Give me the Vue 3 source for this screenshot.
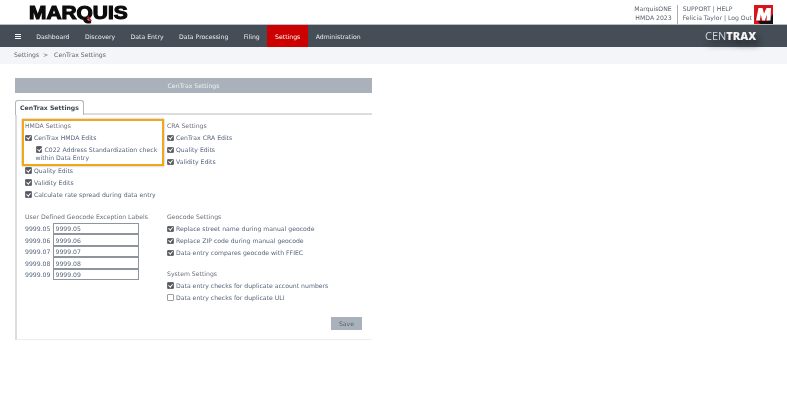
<script setup>
const nav = ['Dashboard', 'Discovery', 'Data Entry', 'Data Processing', 'Filing', 'Settings', 'Administration']
const labels = ['9999.05', '9999.06', '9999.07', '9999.08', '9999.09']
const craRows = ['CenTrax CRA Edits', 'Quality Edits', 'Validity Edits']
const hmdaRows = ['Quality Edits', 'Validity Edits', 'Calculate rate spread during data entry']
const geoRows = [
  'Replace street name during manual geocode',
  'Replace ZIP code during manual geocode',
  'Data entry compares geocode with FFIEC',
]
</script>

<template>
  <div class="page">
    <header class="top">
      <div class="logo">MARQUIS<span class="logo-tail"></span></div>
      <div class="top-right">
        <div class="product">
          <div>MarquisONE</div>
          <div>HMDA 2023</div>
        </div>
        <div class="user">
          <div>SUPPORT | HELP</div>
          <div>Felicia Taylor | Log Out</div>
        </div>
        <svg class="m-logo" width="19" height="19" viewBox="0 0 19 19">
          <rect width="19" height="19" fill="#d8141c" />
          <path d="M0 11 L6 19 H19 V9 L14 16 H3 Z" fill="#111" />
          <path d="M2 15.5 L4.5 3 H8.5 L10 8.5 L12.5 3 H17 L16.5 15.5 H12.5 L13 9.5 L10.8 15.5 H8.2 L6.8 9.5 L5.8 15.5 Z" fill="#fff" />
        </svg>
      </div>
    </header>

    <nav class="nav">
      <span class="burger"><i></i><i></i><i></i></span>
      <a v-for="n in nav" :key="n" class="nav-item" :class="{ active: n === 'Settings' }">{{ n }}</a>
      <div class="brand">CEN<b>TRAX</b></div>
    </nav>

    <div class="crumb">Settings &nbsp;&gt;&nbsp;&nbsp; CenTrax Settings</div>

    <main class="panel">
      <div class="panel-title">CenTrax Settings</div>
      <div class="tabs"><span class="tab">CenTrax Settings</span></div>
      <div class="tab-body">
        <div class="grid">
          <section class="col-left">
            <div class="heading">HMDA Settings</div>
            <label class="row"><span class="cb on"></span>CenTrax HMDA Edits</label>
            <label class="row nested"><span class="cb on"></span>C022 Address Standardization check within Data Entry</label>
            <label v-for="r in hmdaRows" :key="r" class="row"><span class="cb on"></span>{{ r }}</label>
          </section>
          <section class="col-right">
            <div class="heading">CRA Settings</div>
            <label v-for="r in craRows" :key="r" class="row"><span class="cb on"></span>{{ r }}</label>
          </section>
          <section class="col-left lower">
            <div class="heading">User Defined Geocode Exception Labels</div>
            <div v-for="l in labels" :key="l" class="label-row">
              <span>{{ l }}</span>
              <input class="field" :value="l" />
            </div>
          </section>
          <section class="col-right lower">
            <div class="heading">Geocode Settings</div>
            <label v-for="r in geoRows" :key="r" class="row"><span class="cb on"></span>{{ r }}</label>
            <div class="heading second">System Settings</div>
            <label class="row"><span class="cb on"></span>Data entry checks for duplicate account numbers</label>
            <label class="row"><span class="cb"></span>Data entry checks for duplicate ULI</label>
          </section>
        </div>
        <div class="actions"><button class="save">Save</button></div>
        <div class="highlight"></div>
      </div>
    </main>
  </div>
</template>

<style>
body {
  margin: 0;
  background: #fff;
}
</style>

<style scoped>
.page {
  width: 787px;
  height: 411px;
  overflow: hidden;
  background: #fff;
  font-family: "DejaVu Sans", Verdana, sans-serif;
  font-size: 6.15px;
  color: #5a6470;
  /* reference is a downscaled capture, text is soft and grayscale */
  filter: blur(0.3px);
}
.top {
  height: 25px;
  box-sizing: border-box;
  display: flex;
  justify-content: space-between;
  padding: 0 14px 0 29px;
  border-bottom: 1px solid #b9bec4;
}
.logo {
  position: relative;
  margin-top: 3px;
  font-family: "Liberation Sans", Arial, sans-serif;
  font-weight: 700;
  font-size: 18.5px;
  line-height: 20px;
  color: #0c0c0c;
  -webkit-text-stroke: 1.1px #0c0c0c;
  transform-origin: left center;
  transform: scaleX(1.13);
}
.logo-tail {
  position: absolute;
  left: 51px;
  top: 14.5px;
  width: 5px;
  height: 1.6px;
  background: #c8202a;
  transform: rotate(55deg);
}
.top-right {
  display: flex;
  align-items: flex-start;
  line-height: 8.6px;
  padding-top: 5px;
  color: #5a626c;
}
.product {
  text-align: right;
  padding: 0 5px 2px 0;
  border-right: 1px solid #aab0b6;
}
.user {
  padding: 0 2px 0 5px;
}
.nav {
  height: 22px;
  background: #454d57;
  display: flex;
  align-items: stretch;
  padding-left: 15px;
  color: #eceef0;
  position: relative;
}
.burger {
  width: 6px;
  display: flex;
  flex-direction: column;
  justify-content: center;
  gap: 1px;
  margin-right: 7.5px;
}
.burger i {
  display: block;
  height: 1px;
  background: #f4f5f6;
}
.nav-item {
  padding: 0 7.7px;
  display: flex;
  align-items: center;
}
.nav-item.active {
  background: #cc0000;
  color: #fff;
}
.brand {
  position: absolute;
  left: 705px;
  top: 3px;
  font-family: "Open Sans", sans-serif;
  font-size: 11px;
  line-height: 15px;
  color: #d5d8db;
  text-shadow: 3px 5px 6px #1e2228;
}
.brand b {
  color: #f4f4f4;
  font-weight: 800;
}
.crumb {
  height: 17px;
  box-sizing: border-box;
  background: #f3f5f9;
  padding: 3px 0 0 14px;
  line-height: 10px;
  color: #5e6670;
}
.panel {
  width: 357px;
  margin: 14px 0 0 15px;
}
.panel-title {
  height: 15px;
  background: #a9b1bb;
  color: #eef0f2;
  text-align: center;
  line-height: 15px;
}
.tabs {
  margin-top: 7px;
  height: 15px;
  box-sizing: border-box;
  border-bottom: 2px solid #dcdcdc;
  display: flex;
}
.tab {
  height: 15px;
  box-sizing: border-box;
  width: 69px;
  border: 1px solid #b5b5b5;
  border-bottom: 0;
  border-radius: 3px 3px 0 0;
  background: #fff;
  font-weight: 700;
  color: #3f4650;
  text-align: center;
  line-height: 14px;
  font-size: 6.15px;
}
.tab-body {
  position: relative;
  height: 225px;
  box-sizing: border-box;
  border-left: 2px solid #dcdcdc;
  border-bottom: 1px solid #ededed;
  padding: 5px 0 0 8px;
}
.grid {
  display: grid;
  grid-template-columns: 142px 1fr;
  grid-template-rows: 91px auto;
}
.heading {
  line-height: 12px;
  height: 12px;
  color: #6a7079;
}
.heading.second {
  margin-top: 8.5px;
}
.row {
  display: block;
  line-height: 12px;
  min-height: 12px;
  color: #56657a;
}
.row.nested {
  padding-left: 10.5px;
  line-height: 8.7px;
  padding-top: 1.6px;
  padding-bottom: 1.6px;
  width: 124px;
}
.cb {
  display: inline-block;
  box-sizing: border-box;
  width: 6.5px;
  height: 6.5px;
  margin-right: 2.5px;
  vertical-align: -1px;
  border: 1px solid #9a9ea3;
  border-radius: 1px;
  background: #fff;
  position: relative;
}
.cb.on {
  background: #55595f;
  border-color: #6a6e73;
}
.cb.on::after {
  content: "";
  position: absolute;
  left: 1.4px;
  top: -0.2px;
  width: 1.6px;
  height: 3.4px;
  border: solid #fff;
  border-width: 0 1px 1px 0;
  transform: rotate(40deg);
}
.label-row {
  display: flex;
  align-items: center;
  height: 11.45px;
  color: #56657a;
}
.label-row span {
  width: 28px;
}
.field {
  width: 86px;
  height: 11.45px;
  box-sizing: border-box;
  border: 1px solid #8f959c;
  padding: 0 1.5px;
  margin: 0;
  font: inherit;
  color: #56657a;
  background: #fff;
  outline: 0;
}
.actions {
  position: absolute;
  right: 10px;
  top: 202px;
}
.save {
  width: 31px;
  height: 13px;
  border: 0;
  padding: 0;
  background: #a9b1bb;
  color: #5a626c;
  font: inherit;
}
.highlight {
  position: absolute;
  left: 5px;
  top: 4px;
  width: 142px;
  height: 46.5px;
  box-sizing: border-box;
  border: 2.5px solid #f0a818;
  box-shadow: 0 0 2px rgba(0, 0, 0, 0.35);
  pointer-events: none;
}
</style>
